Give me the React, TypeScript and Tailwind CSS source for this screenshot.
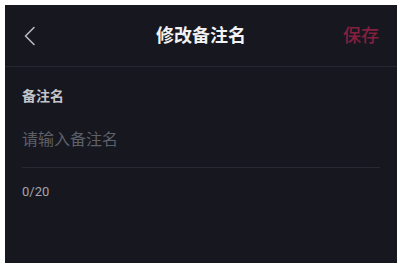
import { useState } from 'react'

const FONT = { fontFamily: 'Roboto, "Noto Sans CJK SC", sans-serif' }

export default function App() {
  const [name, setName] = useState('')

  return (
    <div className="w-[397px] h-[265px] bg-white pt-[5px] pl-[5px] pb-[2px]" style={FONT}>
      <div className="h-full bg-[#16171f] flex flex-col">
        {/* Header */}
        <div className="h-[62px] flex items-center pl-[18px] pr-[18px] border-b border-[#262730]">
          <div className="flex-1 flex items-center">
            <button type="button" className="w-[14px] h-[20px] flex items-center">
              <svg width="13" height="20" viewBox="0 0 13 20" fill="none">
                <path d="M11 1.5 L2.5 10 L11 18.5" stroke="#b9bac0" strokeWidth="1.6" strokeLinecap="round" strokeLinejoin="round" />
              </svg>
            </button>
          </div>
          <h1 className="text-[18px] font-bold text-[#f2f2f4] leading-none">修改备注名</h1>
          <div className="flex-1 flex justify-end">
            <button type="button" className="text-[18px] font-medium text-[#84203f] leading-none">保存</button>
          </div>
        </div>

        {/* Form */}
        <div className="pl-[17px] pr-[17px] pt-[19px]">
          <p className="text-[14px] font-bold text-[#c4c5ca] leading-[20px]">备注名</p>
          <input
            value={name}
            onChange={e => setName(e.target.value.slice(0, 20))}
            placeholder="请输入备注名"
            className="mt-[22px] w-full bg-transparent outline-none text-[16px] leading-[24px] text-white placeholder:text-[#5e6068]"
          />
          <div className="mt-[15px] h-px bg-[#282932]" />
          <p className="mt-[15px] text-[13px] text-[#a4a5aa] leading-[18px]">{name.length}/20</p>
        </div>
      </div>
    </div>
  )
}
